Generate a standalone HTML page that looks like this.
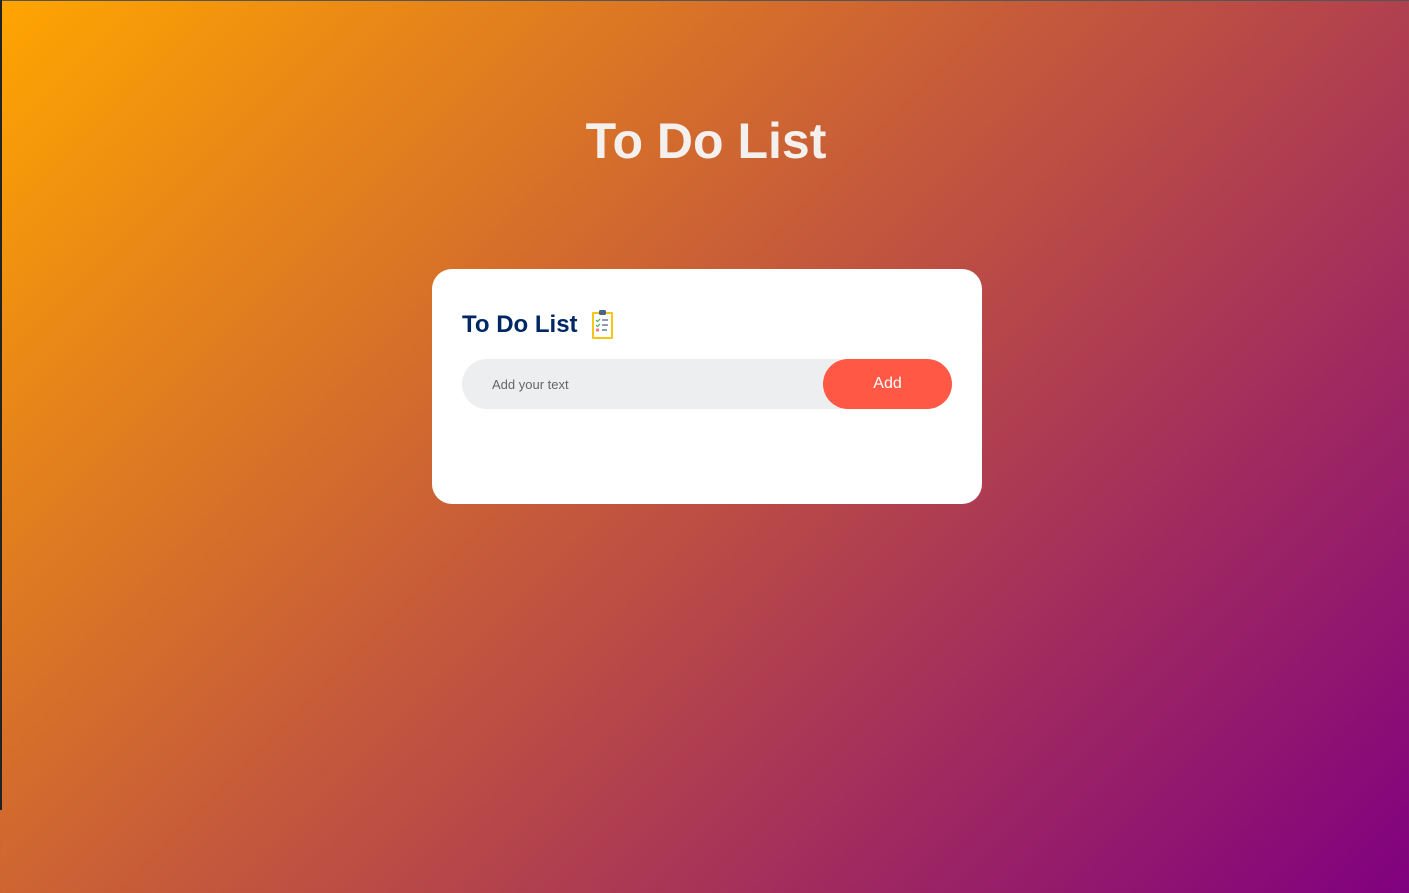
<!DOCTYPE html>
<html><head><style>
html,body{margin:0;padding:0}
body{width:1409px;height:893px;overflow:hidden;position:relative;font-family:"Liberation Sans",Arial,sans-serif;background:linear-gradient(135deg,#ffa500,#800080);}
.bl{position:absolute;left:0;top:0;width:2px;height:810px;background:#222}
.bt{position:absolute;left:0;top:0;width:1409px;height:1px;background:#555}
h1{position:absolute;top:111px;left:0;width:1412px;text-align:center;margin:0;font-size:50px;line-height:60px;color:#f4f0ee;font-weight:bold}
.card{position:absolute;left:432px;top:269px;width:550px;height:235px;background:#fff;border-radius:20px}
h2{position:absolute;left:30px;top:41px;margin:0;font-size:24px;line-height:30px;color:#002765;font-weight:bold}
.ic{position:absolute;left:159px;top:40px}
.row{position:absolute;left:30px;top:90px;width:490px;height:50px;background:#edeef0;border-radius:25px}
.ph{position:absolute;left:30px;top:18px;font-size:13px;color:#666}
.btn{position:absolute;right:0;top:0;width:129px;height:50px;background:#ff5945;border-radius:25px;color:#fff;font-size:16px;text-align:center;line-height:50px}
</style></head><body>
<div class="bt"></div><div class="bl"></div>
<h1>To Do List</h1>
<div class="card">
<h2>To Do List</h2>
<svg class="ic" width="24" height="31" viewBox="0 0 24 31">
<rect x="1" y="3" width="21" height="27" fill="#f5c518" rx="1"/>
<rect x="3" y="5" width="17" height="23" fill="#fff"/>
<rect x="8" y="1" width="7" height="5" rx="1.5" fill="#4b6584"/>
<path d="M5 11l1.5 1.5L9 10M5 16l1.5 1.5L9 15" stroke="#4caf50" stroke-width="1.2" fill="none"/>
<path d="M11 11h6M11 16h6M11 21h5" stroke="#4b6584" stroke-width="1.2"/>
<rect x="5" y="19.5" width="3" height="3" fill="#f08080"/>
</svg>
<div class="row"><span class="ph">Add your text</span><div class="btn">Add</div></div>
</div>
</body></html>
